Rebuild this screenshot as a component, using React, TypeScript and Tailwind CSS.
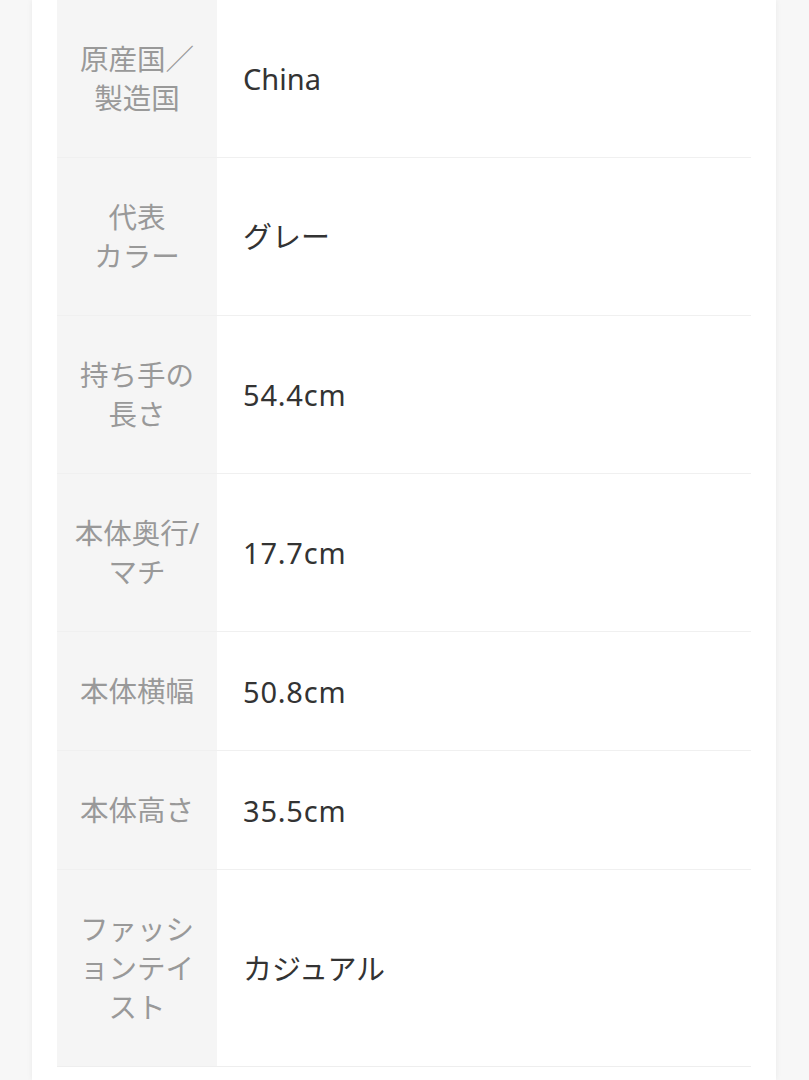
import React from "react";

const rows: { label: string[]; value: string; num?: boolean }[] = [
  { label: ["原産国／", "製造国"], value: "China" },
  { label: ["代表", "カラー"], value: "グレー" },
  { label: ["持ち手の", "長さ"], value: "54.4cm", num: true },
  { label: ["本体奥行/", "マチ"], value: "17.7cm", num: true },
  { label: ["本体横幅"], value: "50.8cm", num: true },
  { label: ["本体高さ"], value: "35.5cm", num: true },
  { label: ["ファッシ", "ョンテイ", "スト"], value: "カジュアル" },
];

export default function App() {
  return (
    <div
      className="min-h-[1080px] w-[809px] bg-[#f7f7f7] overflow-hidden"
      style={{ fontFamily: '"Noto Sans", "Noto Sans CJK JP", sans-serif' }}
    >
      <div className="ml-[32px] w-[744px] min-h-[1080px] bg-white shadow-[0_0_6px_rgba(0,0,0,0.06)] px-[25px]">
        <div className="border-b border-[#eeeeee]">
          {rows.map((r, i) => (
            <div
              key={i}
              className={`flex ${i < rows.length - 1 ? "border-b border-[#f0f0f0]" : ""}`}
            >
              <div className="w-[160px] shrink-0 bg-[#f5f5f5] py-[39.5px] flex flex-col items-center justify-center text-[28.5px] leading-[39px] text-[#999999]">
                {r.label.map((l, j) => (
                  <div key={j} className="whitespace-nowrap">
                    {l}
                  </div>
                ))}
              </div>
              <div
                className={`flex-1 flex items-center pl-[26px] text-[29px] leading-[39px] text-[#333333] ${
                  r.num ? "tracking-[0.8px]" : ""
                }`}
              >
                {r.value}
              </div>
            </div>
          ))}
        </div>
      </div>
    </div>
  );
}
